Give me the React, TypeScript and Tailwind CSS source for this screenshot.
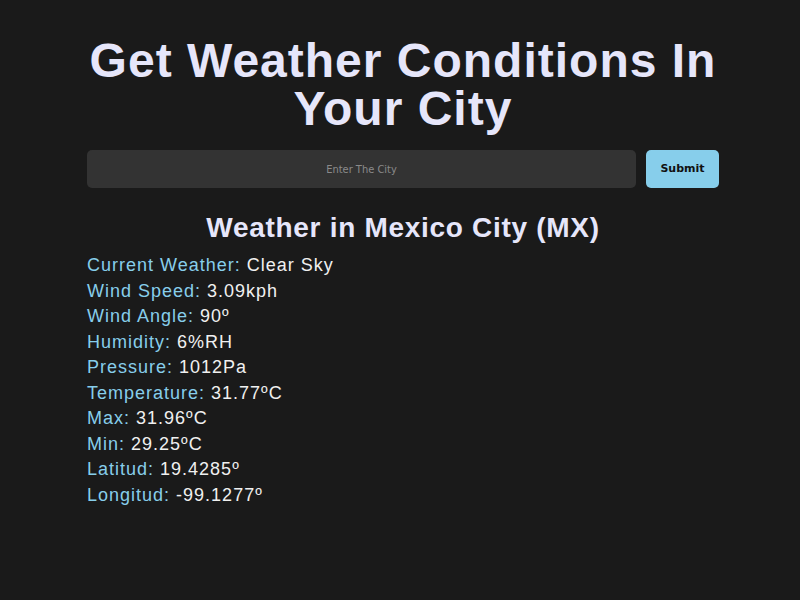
import React from "react";

const rows: [string, string][] = [
  ["Current Weather:", "Clear Sky"],
  ["Wind Speed:", "3.09kph"],
  ["Wind Angle:", "90º"],
  ["Humidity:", "6%RH"],
  ["Pressure:", "1012Pa"],
  ["Temperature:", "31.77ºC"],
  ["Max:", "31.96ºC"],
  ["Min:", "29.25ºC"],
  ["Latitud:", "19.4285º"],
  ["Longitud:", "-99.1277º"],
];

export default function App() {
  return (
    <div
      className="min-h-[600px] w-full bg-[#1a1a1a] pl-[87px]"
      style={{ fontFamily: '"Liberation Sans", Arial, sans-serif' }}
    >
      <div className="w-[632px] pt-[37px]">
        <h1 className="text-center text-[48px] font-bold leading-[48px] tracking-[1px] text-[#e6e6fa]">
          Get Weather Conditions In Your City
        </h1>
        <div className="mt-[17px] flex h-[38px] gap-[10px]">
          <input
            placeholder="Enter The City"
            className="h-full flex-1 rounded-[5px] bg-[#333333] text-center text-[11px] text-[#ccc] outline-none placeholder:text-[#8a8a8a]"
            style={{ fontFamily: '"DejaVu Sans", Verdana, sans-serif', fontStretch: "condensed" }}
          />
          <button
            className="h-full w-[73px] rounded-[5px] bg-[#87ceeb] text-[11px] font-bold text-[#111]"
            style={{ fontFamily: '"DejaVu Sans", Verdana, sans-serif' }}
          >
            Submit
          </button>
        </div>
        <h2 className="mt-[24px] text-center text-[28px] font-bold leading-[32px] tracking-[0.7px] text-[#e6e6fa]">
          Weather in Mexico City (MX)
        </h2>
        <div className="mt-[9px] flex flex-col">
          {rows.map(([k, v]) => (
            <div key={k} className="text-[18px] leading-[25.5px] tracking-[1px]">
              <span className="text-[#87ceeb]">{k}</span>{" "}
              <span className="text-[#f0f0f0]">{v}</span>
            </div>
          ))}
        </div>
      </div>
    </div>
  );
}
